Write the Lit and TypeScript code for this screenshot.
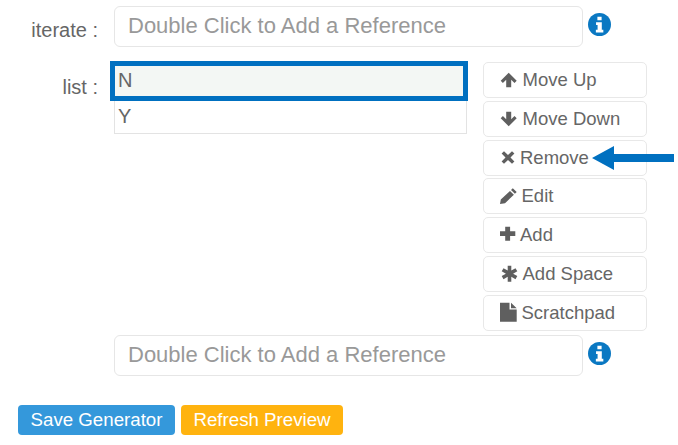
import { LitElement, html, css, svg } from 'lit';
import { customElement } from 'lit/decorators.js';

const icons: Record<string, unknown> = {
	up: svg`<path d="M9.7 1.7 17.7 9.7 15.5 12 12.2 8.8V16.3H7.2V8.8L3.9 12 1.7 9.7Z"/>`,
	down: svg`<path d="M9.7 16.3 17.7 8.3 15.5 6 12.2 9.2V1.7H7.2V9.2L3.9 6 1.7 8.3Z"/>`,
	remove: svg`<path d="M5 2.2 9 6 13 2.2 15.4 4.6 11.5 8.5 15.4 12.4 13 14.8 9 11 5 14.8 2.6 12.4 6.5 8.5 2.6 4.6Z"/>`,
	edit: svg`<path d="M13.8 1.2 17.7 5 15.9 6.8 12 3ZM11 4 14.9 7.8 6 16.2 1 17 1.8 12.4Z"/>`,
	add: svg`<path d="M6.2.7H11.1V5.3H16.3V10H11.1V14.7H6.2V10H1V5.3H6.2Z"/>`,
	star: svg`<path d="M8.7.7H12.3V5.6L16.5 3.2 18.3 6.3 14.1 8.7 18.3 11.1 16.5 14.2 12.3 11.8V16.7H8.7V11.8L4.5 14.2 2.7 11.1 6.9 8.7 2.7 6.3 4.5 3.2 8.7 5.6Z"/>`,
	file: svg`<path d="M1-1.3H10.5V5.5H17.7V17.7H1ZM12-1.3 17.7 4.2H12Z"/>`,
};

const actions = [
	{ icon: 'up', label: 'Move Up', gap: 6 },
	{ icon: 'down', label: 'Move Down', gap: 6 },
	{ icon: 'remove', label: 'Remove', gap: 3.5 },
	{ icon: 'edit', label: 'Edit', gap: 5 },
	{ icon: 'add', label: 'Add', gap: 3.5 },
	{ icon: 'star', label: 'Add Space', gap: 6 },
	{ icon: 'file', label: 'Scratchpad', gap: 5 },
];

@customElement('app-root')
export default class AppRoot extends LitElement {

	static get styles() {
		return css`
			:host {
				display: block;
				position: relative;
				width: 678px;
				height: 445px;
				overflow: hidden;
				background: white;
				color: #555;
				font-family: "Liberation Sans", Arial, sans-serif;
			}

			.form {
				display: grid;
				grid-template-columns: 98px 469px 1fr;
				column-gap: 16px;
				padding-top: 6px;
				align-items: start;
			}

			.label {
				font-size: 20px;
				text-align: right;
				color: #666;
				white-space: pre;
			}

			.iterate-label {
				padding-top: 13px;
			}

			.list-label {
				padding-top: 29px;
			}

			.ref {
				box-sizing: border-box;
				height: 41px;
				border: 1.5px solid #e6e6e6;
				border-radius: 6px;
				padding: 0 13px;
				font-size: 22px;
				line-height: 38px;
				color: #999;
			}

			.info {
				width: 23px;
				height: 23px;
				margin: 7px 0 0 -11px;
				display: block;
			}

			.list-area {
				grid-column: 2 / 4;
				display: flex;
				align-items: flex-start;
				gap: 16px;
				margin-top: 14px;
			}

			.list {
				box-sizing: border-box;
				width: 353px;
				height: 73px;
				border: 1.5px solid #e3e3e3;
				border-top: none;
			}

			.row {
				box-sizing: border-box;
				height: 30px;
				padding: 0 3px;
				font-size: 20px;
				line-height: 30px;
				color: #666;
			}

			.row.selected {
				height: 40px;
				margin: 0 -2px 0 -5px;
				padding: 0 3px;
				line-height: 29px;
				background: #f3f7f4;
				border: 5px solid #0070c0;
			}

			.actions {
				display: flex;
				flex-direction: column;
				gap: 2.8px;
				margin-top: 1px;
			}

			.action {
				box-sizing: border-box;
				width: 164px;
				height: 36px;
				display: flex;
				align-items: center;
				padding-left: 14.5px;
				border: 1.5px solid #e8e8e8;
				border-radius: 5px;
				font-size: 18.5px;
				color: #666;
				white-space: nowrap;
			}

			.action svg {
				width: 18px;
				height: 18px;
				fill: #5f5f5f;
				flex: none;
				overflow: visible;
			}

			.bottom-ref {
				grid-column: 2;
				margin-top: 4.5px;
			}

			.bottom-info {
				grid-column: 3;
				margin-top: 11px;
			}

			.footer {
				display: flex;
				gap: 6px;
				padding: 29px 0 0 18px;
			}

			.btn {
				box-sizing: border-box;
				height: 30px;
				border-radius: 4px;
				color: white;
				font-size: 18.7px;
				line-height: 30px;
				text-align: center;
			}

			.save {
				width: 157px;
				background: #3498db;
			}

			.refresh {
				width: 162px;
				background: #ffb30f;
			}

			.arrow {
				position: absolute;
				left: 592px;
				top: 146px;
				width: 82px;
				height: 24px;
				fill: #0070c0;
			}
		`;
	}

	renderInfo(extra: string) {
		return html`
			<svg class="info ${extra}" viewBox="0 0 24 24">
				<circle cx="12" cy="12" r="12" fill="#0a78c2"/>
				<path fill="white" d="M9.8 3.8h4.4v3.8H9.8ZM8.4 9.6h6v7.8h1.6v3H8.2v-3h1.8v-4.8H8.4Z"/>
			</svg>
		`;
	}

	render() {
		return html`
			<div class="form">
				<div class="label iterate-label">iterate :</div>
				<div class="ref">Double Click to Add a Reference</div>
				${this.renderInfo('')}

				<div class="label list-label">list :</div>
				<div class="list-area">
					<div class="list">
						<div class="row selected">N</div>
						<div class="row">Y</div>
					</div>
					<div class="actions">
						${actions.map(a => html`
							<div class="action">
								<svg viewBox="0 0 18 18" style="margin-right: ${a.gap}px">${icons[a.icon]}</svg>
								<span>${a.label}</span>
							</div>
						`)}
					</div>
				</div>

				<div class="ref bottom-ref">Double Click to Add a Reference</div>
				${this.renderInfo('bottom-info')}
			</div>
			<div class="footer">
				<div class="btn save">Save Generator</div>
				<div class="btn refresh">Refresh Preview</div>
			</div>
			<svg class="arrow" viewBox="0 0 82 24">
				<path d="M0 12 22 0V8H82V16H22V24Z"/>
			</svg>
		`;
	}
}
